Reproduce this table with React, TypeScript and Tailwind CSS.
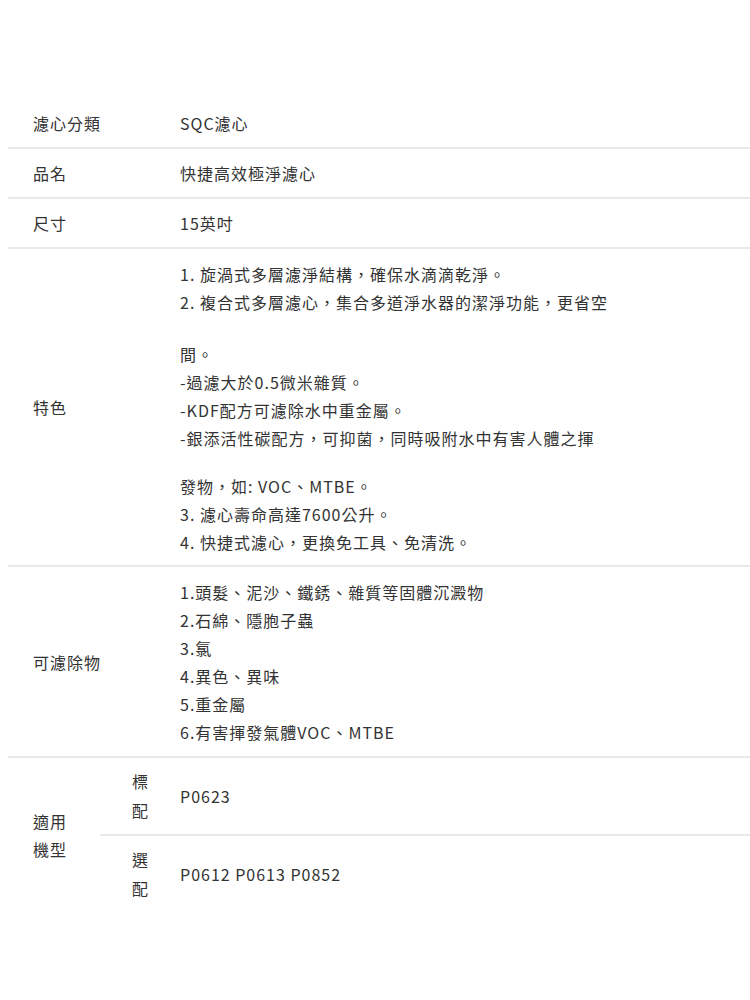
import React from 'react'

const features: (string | null)[] = [
  '1. 旋渦式多層濾淨結構，確保水滴滴乾淨。',
  '2. 複合式多層濾心，集合多道淨水器的潔淨功能，更省空',
  null,
  '間。',
  '-過濾大於0.5微米雜質。',
  '-KDF配方可濾除水中重金屬。',
  '-銀添活性碳配方，可抑菌，同時吸附水中有害人體之揮',
  null,
  '發物，如: VOC、MTBE。',
  '3. 濾心壽命高達7600公升。',
  '4. 快捷式濾心，更換免工具、免清洗。',
]

const removes = [
  '1.頭髮、泥沙、鐵銹、雜質等固體沉澱物',
  '2.石綿、隱胞子蟲',
  '3.氯',
  '4.異色、異味',
  '5.重金屬',
  '6.有害揮發氣體VOC、MTBE',
]

function SimpleRow({ label, value }: { label: string; value: string }) {
  return (
    <div className="flex items-center h-[50px] border-b-2 border-[#e9e9e9]">
      <div className="w-[172px] pl-[25px]">{label}</div>
      <div className="flex-1">{value}</div>
    </div>
  )
}

export default function App() {
  return (
    <div
      className="w-[750px] min-h-[1000px] bg-white pt-[99px] pl-[8px] text-[16px] tracking-[1px] text-[#333]"
      style={{ fontFamily: '"Noto Sans CJK TC", "Noto Sans", sans-serif' }}
    >
      <SimpleRow label="濾心分類" value="SQC濾心" />
      <SimpleRow label="品名" value="快捷高效極淨濾心" />
      <SimpleRow label="尺寸" value="15英吋" />

      {/* 特色 */}
      <div className="flex items-center border-b-2 border-[#e9e9e9]">
        <div className="w-[172px] pl-[25px]">特色</div>
        <div className="flex-1 pt-[11px] pb-[9px]">
          {features.map((line, i) =>
            line === null ? (
              <div key={i} className={i === 2 ? 'h-[24px]' : 'h-[20px]'} />
            ) : (
              <div key={i} className="leading-[28px] whitespace-nowrap">
                {line}
              </div>
            )
          )}
        </div>
      </div>

      {/* 可濾除物 */}
      <div className="flex items-center border-b-2 border-[#e9e9e9]">
        <div className="w-[172px] pl-[25px]">可濾除物</div>
        <div className="flex-1 pt-[11px] pb-[10px]">
          {removes.map((line) => (
            <div key={line} className="leading-[28px] whitespace-nowrap">
              {line}
            </div>
          ))}
        </div>
      </div>

      {/* 適用機型 */}
      <div className="flex">
        <div className="w-[92px] pl-[25px] flex flex-col justify-center">
          <div className="leading-[28px]">適用</div>
          <div className="leading-[28px]">機型</div>
        </div>
        <div className="flex-1 flex flex-col">
          <div className="flex items-center h-[78px] border-b-2 border-[#e9e9e9]">
            <div className="w-[80px] pl-[32px]">
              <div className="leading-[29px]">標</div>
              <div className="leading-[29px]">配</div>
            </div>
            <div className="flex-1">P0623</div>
          </div>
          <div className="flex items-center h-[76px]">
            <div className="w-[80px] pl-[32px]">
              <div className="leading-[29px]">選</div>
              <div className="leading-[29px]">配</div>
            </div>
            <div className="flex-1">P0612 P0613 P0852</div>
          </div>
        </div>
      </div>
    </div>
  )
}
